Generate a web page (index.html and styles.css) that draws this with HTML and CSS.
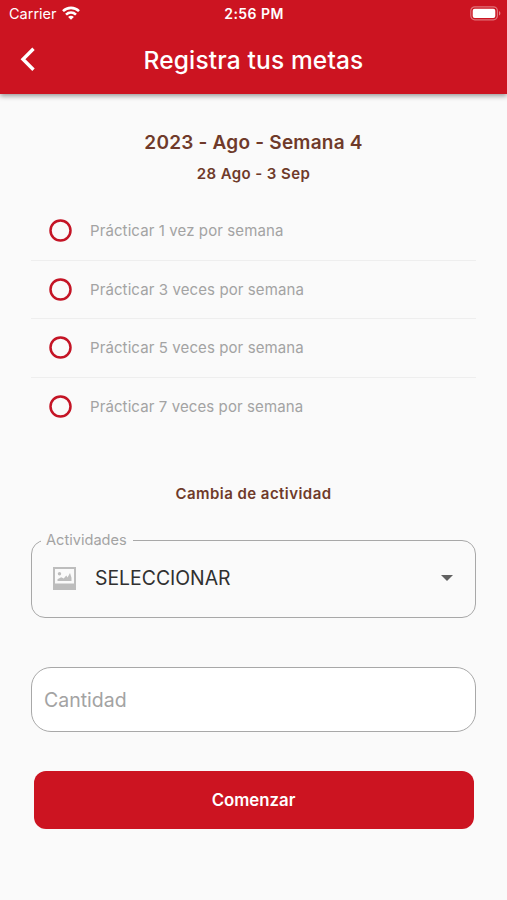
FILE: index.html
```html
<!DOCTYPE html>
<html lang="es">
<head>
    <meta charset="utf-8">
    <title>Registra tus metas</title>
    <link rel="stylesheet" href="styles.css">
</head>
<body>
    <header class="header">
        <div class="status">
            <div class="carrier">
                <span>Carrier</span>
                <svg width="18" height="14" viewBox="0 0 18 14" fill="none" stroke="#fff" stroke-width="2.6">
                    <path d="M1 5.100C5.500 .8 12.500 .8 17 5.100"/>
                    <path d="M4 8.600c2.900-2.700 7.100-2.700 10 0"/>
                    <path d="M9 13.800 6.100 10.900c1.700-1.500 4.100-1.500 5.800 0z" fill="#fff" stroke="none"/>
                </svg>
            </div>
            <span class="time">2:56 PM</span>
            <svg class="battery" width="31" height="15" viewBox="0 0 31 15">
                <rect x=".8" y=".8" width="26.600" height="13" rx="4" fill="none" stroke="#fff" stroke-opacity=".4" stroke-width="1.200"/>
                <rect x="2.700" y="2.700" width="22.600" height="9.200" rx="2" fill="#fff"/>
                <path d="M29 5v4.600c1.900-.8 1.900-3.800 0-4.600z" fill="#fff" fill-opacity=".45"/>
            </svg>
        </div>
        <div class="navbar">
            <svg class="back" width="16" height="25" viewBox="0 0 16 25" fill="none" stroke="#fff" stroke-width="3.400">
                <path d="M14.500 1.800 4 12.300l10.500 10.500"/>
            </svg>
            <h1 class="title">Registra tus metas</h1>
        </div>
    </header>

    <main class="content">
        <h2 class="week">2023 - Ago - Semana 4</h2>
        <p class="dates">28 Ago - 3 Sep</p>

        <ul class="goals">
            <li class="goal">
                <svg class="radio" viewBox="0 0 23 23"><circle cx="11.500" cy="11.500" r="10"/></svg>
                Prácticar 1 vez por semana
            </li>
            <li class="goal">
                <svg class="radio" viewBox="0 0 23 23"><circle cx="11.500" cy="11.500" r="10"/></svg>
                Prácticar 3 veces por semana
            </li>
            <li class="goal">
                <svg class="radio" viewBox="0 0 23 23"><circle cx="11.500" cy="11.500" r="10"/></svg>
                Prácticar 5 veces por semana
            </li>
            <li class="goal">
                <svg class="radio" viewBox="0 0 23 23"><circle cx="11.500" cy="11.500" r="10"/></svg>
                Prácticar 7 veces por semana
            </li>
        </ul>

        <h3 class="change">Cambia de actividad</h3>

        <fieldset class="activity">
            <legend class="activity-label">Actividades</legend>
            <div class="activity-row">
                <svg width="23" height="23" viewBox="0 0 23 23">
                    <path fill="#bdbdbd" fill-rule="evenodd" d="M0 0h23v23H0zM2 2v14.500h19V2z"/>
                    <circle cx="6.500" cy="6.700" r="1.700" fill="#bdbdbd"/>
                    <path fill="#bdbdbd" d="M4.500 14v-1.700l3.700-2 2.500 1.200 2.600-3 1.200 2L17 6l1.500 4.700V14z"/>
                </svg>
                <span class="activity-value">SELECCIONAR</span>
                <svg width="12" height="6" viewBox="0 0 12 6"><path fill="#616161" d="M0 0h12L6 6z"/></svg>
            </div>
        </fieldset>

        <input class="amount" type="text" placeholder="Cantidad">

        <button class="start">Comenzar</button>
    </main>
</body>
</html>
```

FILE: styles.css
```css
* {
    box-sizing: border-box;
}
body {
    margin: 0;
    background: #fafafa;
    font-family: Inter, Roboto, sans-serif;
}
.header {
    height: 94px;
    background: #cc1421;
    color: white;
    box-shadow: 0 2px 5px rgba(0, 0, 0, 0.4);
}
.status {
    display: grid;
    grid-template-columns: 1fr auto 1fr;
    align-items: center;
    height: 27px;
    padding: 0 6px 0 9px;
    font-size: 14.5px;
}
.carrier {
    display: flex;
    align-items: center;
    gap: 5px;
    margin-top: -1px;
}
.time {
    margin-left: -2px;
    font-size: 14px;
    font-weight: 600;
    letter-spacing: 0.45px;
}
.battery {
    justify-self: end;
}
.navbar {
    display: grid;
    grid-template-columns: 1fr auto 1fr;
    align-items: center;
    height: 65px;
    padding: 0 19px;
}
.title {
    margin: 0;
    font-size: 24.5px;
    font-weight: 500;
    letter-spacing: 0.15px;
    grid-column: 2;
}
.content {
    padding: 36px 31px 0;
}
.week, .dates, .change {
    margin: 0;
    text-align: center;
    color: #6f3a2a;
    font-weight: 600;
}
.week {
    font-size: 19px;
    line-height: 26px;
    letter-spacing: 0.22px;
}
.dates {
    margin-top: 8px;
    font-size: 15px;
    line-height: 20px;
    letter-spacing: 0.4px;
}
.goals {
    margin: 18px 0 0;
    padding: 0;
    list-style: none;
}
.goal {
    display: flex;
    align-items: center;
    gap: 18px;
    height: 58.5px;
    padding-left: 18px;
    border-bottom: 1px solid #eeeeee;
    color: #a3a3a3;
    font-size: 15px;
    letter-spacing: 0.1px;
}
.goal:last-child {
    border-bottom: none;
}
.radio {
    width: 23px;
    height: 23px;
    fill: none;
    stroke: #c41425;
    stroke-width: 2.5px;
}
.change {
    margin-top: 48px;
    font-size: 15px;
    line-height: 20px;
    letter-spacing: 0.45px;
}
.activity {
    height: 87px;
    margin: 27px 0 0;
    padding: 0 22px 0 21px;
    border: 1.5px solid #a8a8a8;
    border-radius: 14px;
}
.activity-label {
    margin-left: -12px;
    padding: 0 6px 0 5px;
    color: #a3a3a3;
    font-size: 14.6px;
    line-height: 18px;
}
.activity-row {
    display: flex;
    align-items: center;
    height: 58px;
}
.activity-value {
    flex: 1;
    margin-left: 19px;
    color: #303030;
    font-size: 19.4px;
}
.amount {
    display: block;
    width: 100%;
    height: 65px;
    margin-top: 49px;
    padding: 0 12px;
    border: 1.5px solid #a8a8a8;
    border-radius: 20px;
    background: white;
    font-family: inherit;
    font-size: 19.5px;
}
.amount::placeholder {
    color: #a3a3a3;
}
.start {
    display: block;
    width: 440px;
    height: 58px;
    margin: 39px auto 0;
    border: none;
    border-radius: 12px;
    background: #cc1421;
    color: white;
    font-family: inherit;
    font-size: 16.8px;
    font-weight: 600;
}
```
